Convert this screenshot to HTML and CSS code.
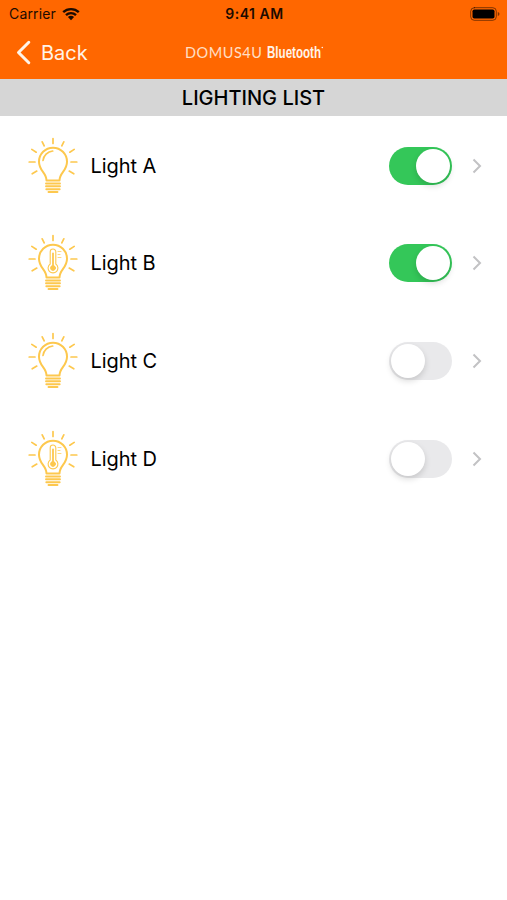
FILE: index.html
```html
<!DOCTYPE html>
<html lang="en">
<head>
<meta charset="utf-8">
<title>Lighting List</title>
<link rel="stylesheet" href="styles.css">
</head>
<body>
<svg class="defs" width="0" height="0" aria-hidden="true">
  <symbol id="bulb" viewBox="0 0 50 58">
    <path d="M25 1.500V6.500M14.200 4.800l2 4M35.800 4.800l-2 4M3.800 12.400l4.400 2.800M46.200 12.400l-4.400 2.800M1.200 25H7M43 25h5.800M4.200 36.800l4.600-2.700M45.800 36.800l-4.600-2.700" stroke-width="1.700"/>
    <path d="M18.500 43.500C18.500 35.500 11 34 11 24.700A14 14 0 0 1 39 24.700C39 34 31.500 35.500 31.500 43.500Z" stroke-width="2"/>
    <path d="M18 46.500h14M18 49.300h14M18.300 52.200h13.400M20.500 55h9" stroke-width="1.900"/>
  </symbol>
  <symbol id="shine" viewBox="0 0 50 58">
    <path d="M15 23.500c.5-5 4.500-9 9.700-9.500" stroke-width="1.700"/>
  </symbol>
  <symbol id="thermo" viewBox="0 0 50 58">
    <path d="M22.200 30V17.800a2.800 2.800 0 0 1 5.600 0V30a4.900 4.900 0 1 1-5.600 0Z" stroke-width="1.100"/>
    <path d="M25 19.500v13" stroke-width="1.800"/>
    <circle cx="25" cy="34" r="2.400" fill="currentColor"/>
    <path d="M30 17.500h3M30 20.500h2M30 23.500h3" stroke-width=".7"/>
  </symbol>
  <symbol id="chevron" viewBox="0 0 10 16">
    <path d="M1.500 1.500L8 8L1.500 14.500" stroke-width="2"/>
  </symbol>
</svg>
<header class="header">
  <div class="status">
    <div class="carrier"><span class="carrier-name">Carrier</span>
      <svg class="wifi" viewBox="0 0 18 14">
        <path d="M1.200 5.200a11.300 11.300 0 0 1 15.600 0M4 8.100a7.200 7.200 0 0 1 10 0" stroke-width="2.400"/>
        <path d="M5.900 10.100a4.500 4.500 0 0 1 6.200 0L9 13.300Z" fill="currentColor" stroke="none"/>
      </svg>
    </div>
    <div class="time">9:41 AM</div>
    <svg class="battery" viewBox="0 0 30 14">
      <rect x=".7" y=".7" width="25.600" height="12.600" rx="3.600" stroke-opacity=".5" stroke-width="1"/>
      <rect x="2.500" y="2.500" width="22" height="9" rx="1.800" fill="currentColor" stroke="none"/>
      <path d="M27.800 5v4q1.700-.7 1.700-2t-1.700-2Z" fill="currentColor" fill-opacity=".5" stroke="none"/>
    </svg>
  </div>
  <nav class="nav">
    <div class="back">
      <svg class="back-icon" viewBox="0 0 15 25"><path d="M12.800 2.300L2.500 12.500L12.800 22.700" stroke-width="3"/></svg>
      <span class="back-label">Back</span>
    </div>
    <svg class="brand" viewBox="0 0 140 24">
      <text class="brand-domus" x="0" y="17" textLength="77" lengthAdjust="spacing">DOMUS4U</text>
      <text class="brand-bt" x="82" y="17" textLength="54" lengthAdjust="spacingAndGlyphs">Bluetooth</text>
      <circle cx="137.300" cy="6.500" r=".8" fill="currentColor" stroke="none"/>
    </svg>
  </nav>
</header>
<h1 class="title"><span class="title-text">LIGHTING LIST</span></h1>
<main class="list">
  <div class="row">
    <svg class="bulb"><use href="#bulb"/><use href="#shine"/></svg>
    <span class="name">Light A</span><span class="switch on"><span class="knob"></span></span>
    <svg class="chevron"><use href="#chevron"/></svg>
  </div>
  <div class="row">
    <svg class="bulb"><use href="#bulb"/><use href="#thermo"/></svg>
    <span class="name">Light B</span><span class="switch on"><span class="knob"></span></span>
    <svg class="chevron"><use href="#chevron"/></svg>
  </div>
  <div class="row">
    <svg class="bulb"><use href="#bulb"/><use href="#shine"/></svg>
    <span class="name">Light C</span><span class="switch"><span class="knob"></span></span>
    <svg class="chevron"><use href="#chevron"/></svg>
  </div>
  <div class="row">
    <svg class="bulb"><use href="#bulb"/><use href="#thermo"/></svg>
    <span class="name">Light D</span><span class="switch"><span class="knob"></span></span>
    <svg class="chevron"><use href="#chevron"/></svg>
  </div>
</main>
</body>
</html>
```
FILE: styles.css
```css
* { box-sizing: border-box; }
body { margin: 0; background: #fff; color: #000; font-family: Inter, "Liberation Sans", sans-serif; }
svg { display: block; flex: none; fill: none; stroke: currentColor; stroke-linecap: round; stroke-linejoin: round; }
.defs { height: 0; }
.header { height: 79px; background: #ff6700; }
.status { display: grid; grid-template-columns: 1fr auto 1fr; align-items: center; height: 27px; padding: 0 7px 0 9px; color: #1c0b00; }
.carrier { display: flex; align-items: center; gap: 6px; font-size: 14px; }
.carrier-name { letter-spacing: .15px; }
.wifi { width: 18px; height: 14px; stroke-linecap: butt; }
.time { font-size: 14px; font-weight: 600; letter-spacing: .5px; }
.battery { width: 30px; height: 14px; justify-self: end; color: #000; }
.nav { display: grid; grid-template-columns: 1fr 140px 1fr; align-items: center; height: 51px; padding: 0 16px; color: #fff4e8; }
.back { display: flex; align-items: center; gap: 10px; font-size: 20px; }
.back-icon { width: 15px; height: 25px; }
.brand { width: 140px; height: 24px; margin-left: 1px; overflow: visible; }
.brand text { fill: currentColor; stroke: none; }
.brand-domus { font: 14.500px Lato, sans-serif; opacity: .85; }
.brand-bt { font: bold 16px "Liberation Sans Narrow", "Liberation Sans", sans-serif; }
.title { display: flex; align-items: center; justify-content: center; height: 37px; margin: 0; background: #d6d6d6; font-size: 20px; font-weight: 500; }
.list { display: grid; grid-template-rows: repeat(4, 97.700px); padding-top: .7px; }
.row { display: flex; align-items: center; padding: 0 25px 0 28px; }
.bulb { width: 50px; height: 58px; color: #fdc84e; }
.name { flex: 1; padding-left: 12.500px; font-size: 20px; letter-spacing: -.05px; }
.switch { display: flex; width: 63px; height: 38px; padding: 2px; border-radius: 19px; background: #e9e9eb; }
.switch.on { justify-content: flex-end; background: #34c759; }
.knob { width: 34px; height: 34px; border-radius: 50%; background: #fff; box-shadow: 0 3px 6px rgba(0, 0, 0, .15); }
.chevron { width: 10px; height: 16px; margin-left: 20px; color: #c2c2c4; stroke-linecap: butt; stroke-linejoin: miter; }
```
